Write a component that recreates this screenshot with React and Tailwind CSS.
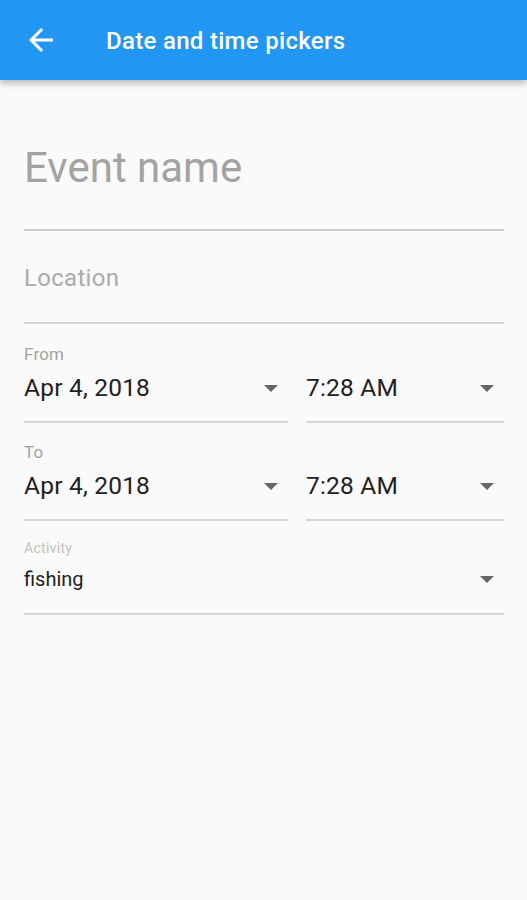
import React from "react";

const Arrow = () => (
  <svg width="14" height="7" viewBox="0 0 14 7" className="shrink-0">
    <path d="M0 0 L14 0 L7 7 Z" fill="#666666" />
  </svg>
);

function DateTimeRow({ label, first }) {
  const labelCls = first
    ? "pt-[20px] text-[17px] leading-[20px] tracking-[0.2px] text-[#a3a3a3]"
    : "pt-[19px] text-[17px] leading-[20px] tracking-[0.2px] text-[#a3a3a3]";
  return (
    <div className="flex gap-[18px]">
      <div className="flex-1">
        <div className={labelCls}>{label}</div>
        <div className="flex items-center justify-between pr-[10px] pt-[9px] pb-[18px] border-b-2 border-[#d6d6d6]">
          <span className="text-[24.5px] leading-[30px] tracking-[0.2px] text-[#212121]">Apr 4, 2018</span>
          <Arrow />
        </div>
      </div>
      <div className="w-[198px]">
        <div className={labelCls}>&nbsp;</div>
        <div className="flex items-center justify-between pr-[10px] pt-[9px] pb-[18px] border-b-2 border-[#d6d6d6]">
          <span className="text-[24.5px] leading-[30px] tracking-[0.2px] text-[#212121]">7:28 AM</span>
          <Arrow />
        </div>
      </div>
    </div>
  );
}

export default function App() {
  return (
    <div className="w-[527px] h-[900px] bg-[#fafafa] overflow-hidden" style={{ fontFamily: "Roboto, 'Liberation Sans', sans-serif" }}>
      <div className="relative z-10 h-20 bg-[#2196f3] flex items-center shadow-[0_3px_7px_rgba(0,0,0,0.28)]">
        <div className="w-[106px] pl-[23px] flex items-center">
          <svg width="36" height="36" viewBox="0 0 24 24">
            <path d="M20 11H7.83l5.59-5.59L12 4l-8 8 8 8 1.41-1.41L7.83 13H20v-2z" fill="#ffffff" />
          </svg>
        </div>
        <div className="text-white text-[24px] font-medium leading-none tracking-[0.3px] pt-[1px]">Date and time pickers</div>
      </div>

      <div className="pl-6 pr-[23px]">
        <div className="pt-[64px] border-b-2 border-[#cccccc] pb-[37px]">
          <div className="text-[42px] leading-[48px] text-[#a3a3a3]">Event name</div>
        </div>

        <div className="pt-[33px] border-b-2 border-[#d6d6d6] pb-[30px]">
          <div className="text-[24px] leading-[28px] tracking-[0.3px] text-[#ababab]">Location</div>
        </div>

        <DateTimeRow label="From" first />
        <DateTimeRow label="To" />

        <div>
          <div className="pt-[19px] text-[14px] leading-[16px] tracking-[0.3px] text-[#c2c2c2]">Activity</div>
          <div className="flex items-center justify-between pr-[10px] pt-[11px] pb-[22px] border-b-2 border-[#d6d6d6]">
            <span className="text-[20px] leading-[24px] text-[#212121]">fishing</span>
            <Arrow />
          </div>
        </div>
      </div>
    </div>
  );
}
